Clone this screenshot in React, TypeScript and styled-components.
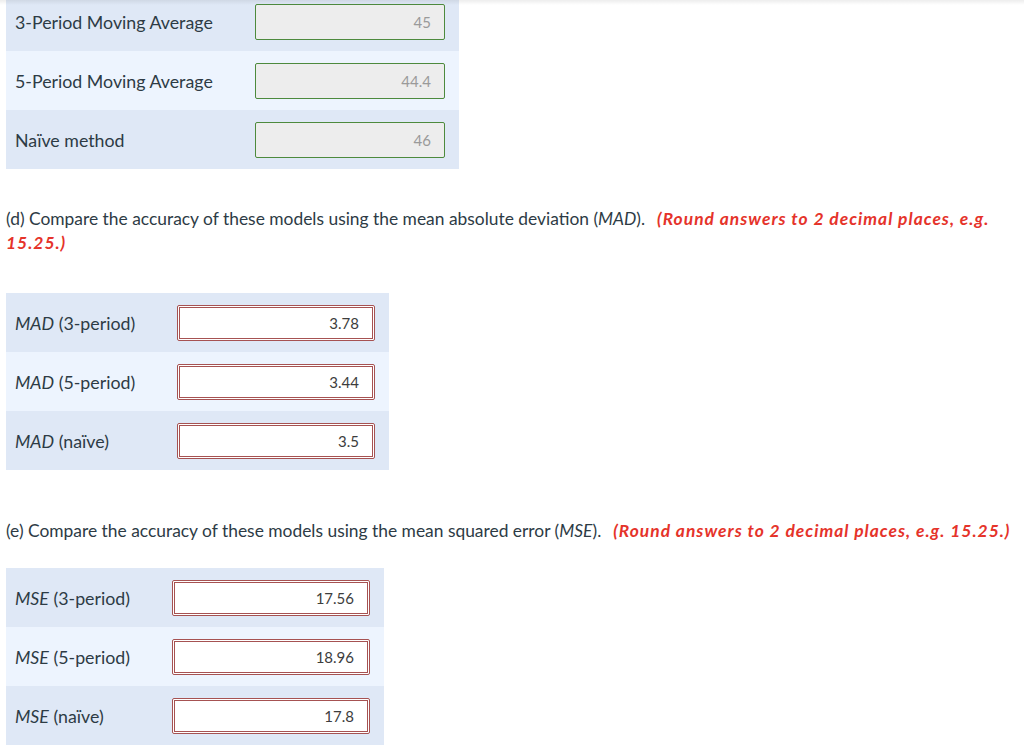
import React from "react";
import styled, { createGlobalStyle, css } from "styled-components";

const GlobalStyle = createGlobalStyle`
  html, body {
    margin: 0;
    padding: 0;
    background: #fff;
  }
  body {
    font-family: Lato, "Open Sans", sans-serif;
    color: #2d3b45;
  }
`;

const Page = styled.div`
  position: relative;
  padding: 0 4px 0 6px;
  overflow: hidden;
  height: 753px;
`;

const TopShade = styled.div`
  position: absolute;
  top: 0;
  left: 0;
  right: 0;
  height: 5px;
  background: linear-gradient(to bottom, rgba(0, 0, 0, 0.07), rgba(0, 0, 0, 0));
  pointer-events: none;
`;

const Table = styled.div<{ labelWidth: number; offset?: number }>`
  display: grid;
  grid-template-columns: ${(p) => p.labelWidth}px auto;
  width: max-content;
  margin-top: ${(p) => p.offset ?? 0}px;
`;

const Row = styled.div<{ light?: boolean }>`
  display: contents;
  & > * {
    background: ${(p) => (p.light ? "#edf4fe" : "#dfe8f6")};
  }
`;

const Label = styled.div`
  display: flex;
  align-items: center;
  height: 59px;
  padding-left: 9px;
  font-size: 17.8px;
  color: #2d3b45;
  em {
    font-style: italic;
  }
`;

const InputCell = styled.div`
  display: flex;
  align-items: center;
  height: 59px;
  padding: 0 14px 0 9px;
`;

const Field = styled.div<{ kind: "given" | "answer"; width: number }>`
  box-sizing: border-box;
  width: ${(p) => p.width}px;
  height: 36px;
  display: flex;
  align-items: center;
  justify-content: flex-end;
  border-radius: 2px;
  font-size: 15px;
  padding-right: 13px;
  ${(p) =>
    p.kind === "given"
      ? css`
          background: #ededed;
          border: 1px solid #4d8a3d;
          color: #9a9a9a;
        `
      : css`
          background: #fff;
          border: 3px double #a65252;
          color: #3d3d3d;
        `}
`;

const Prompt = styled.p<{ top: number; bottom: number }>`
  margin: ${(p) => p.top}px 0 ${(p) => p.bottom}px;
  font-size: 17.4px;
  line-height: 24px;
  color: #2d3b45;
`;

const Hint = styled.strong`
  margin-left: 12px;
  color: #e5332a;
  font-style: italic;
  font-weight: 700;
  letter-spacing: 1px;
`;

type Item = { label: React.ReactNode; value: string };

const given: Item[] = [
  { label: "3-Period Moving Average", value: "45" },
  { label: "5-Period Moving Average", value: "44.4" },
  { label: "Naïve method", value: "46" },
];

const mad: Item[] = [
  { label: <><em>MAD</em>&nbsp;(3-period)</>, value: "3.78" },
  { label: <><em>MAD</em>&nbsp;(5-period)</>, value: "3.44" },
  { label: <><em>MAD</em>&nbsp;(naïve)</>, value: "3.5" },
];

const mse: Item[] = [
  { label: <><em>MSE</em>&nbsp;(3-period)</>, value: "17.56" },
  { label: <><em>MSE</em>&nbsp;(5-period)</>, value: "18.96" },
  { label: <><em>MSE</em>&nbsp;(naïve)</>, value: "17.8" },
];

const AnswerTable = ({
  items,
  labelWidth,
  fieldWidth,
  kind,
  offset,
}: {
  items: Item[];
  labelWidth: number;
  fieldWidth: number;
  kind: "given" | "answer";
  offset?: number;
}) => (
  <Table labelWidth={labelWidth} offset={offset}>
    {items.map((it, i) => (
      <Row key={i} light={i % 2 === 1}>
        <Label>{it.label}</Label>
        <InputCell>
          <Field kind={kind} width={fieldWidth}>
            {it.value}
          </Field>
        </InputCell>
      </Row>
    ))}
  </Table>
);

export default function App() {
  return (
    <Page>
      <GlobalStyle />
      <AnswerTable items={given} labelWidth={240} fieldWidth={190} kind="given" offset={-8} />
      <Prompt top={38} bottom={38}>
        (d) Compare the accuracy of these models using the mean absolute deviation (<em>MAD</em>).
        <Hint>(Round answers to 2 decimal places, e.g. 15.25.)</Hint>
      </Prompt>
      <AnswerTable items={mad} labelWidth={162} fieldWidth={198} kind="answer" />
      <Prompt top={49} bottom={25}>
        (e) Compare the accuracy of these models using the mean squared error (<em>MSE</em>).
        <Hint>(Round answers to 2 decimal places, e.g. 15.25.)</Hint>
      </Prompt>
      <AnswerTable items={mse} labelWidth={157} fieldWidth={198} kind="answer" />
      <TopShade />
    </Page>
  );
}
